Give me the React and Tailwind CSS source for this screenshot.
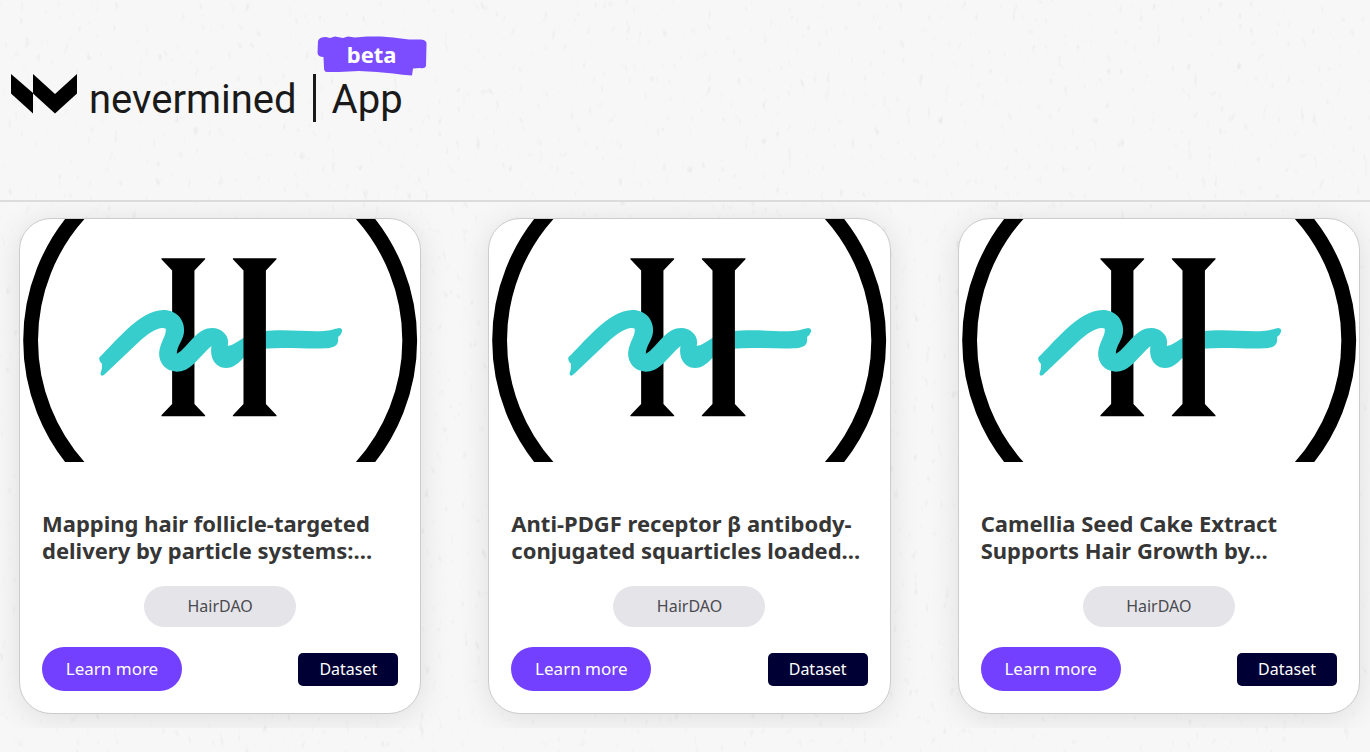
const datasets = [
    {
        id: 1,
        title: "Mapping hair follicle-targeted delivery by particle systems:...",
        author: "HairDAO",
        type: "Dataset",
    },
    {
        id: 2,
        title: "Anti-PDGF receptor β antibody-conjugated squarticles loaded...",
        author: "HairDAO",
        type: "Dataset",
    },
    {
        id: 3,
        title: "Camellia Seed Cake Extract Supports Hair Growth by...",
        author: "HairDAO",
        type: "Dataset",
    },
];

// Faint paper grain behind the whole page
function PaperTexture() {
    return (
        <svg
            className="absolute inset-0 -z-10 h-full w-full"
            aria-hidden="true"
        >
            <filter id="grain" x="0" y="0" width="100%" height="100%">
                <feTurbulence
                    type="fractalNoise"
                    baseFrequency="0.16 0.08"
                    numOctaves="2"
                    seed="4"
                />
                <feColorMatrix values="0 0 0 0 0.6  0 0 0 0 0.6  0 0 0 0 0.6  1.2 0 0 0 -0.81" />
            </filter>
            <rect width="100%" height="100%" filter="url(#grain)" />
        </svg>
    );
}

function NeverminedMark() {
    return (
        <svg className="h-10 w-[66px]" viewBox="0 0 66 40" aria-hidden="true">
            <path d="M0 0L22 19V39.500L0 19.500Z" />
            <path d="M22 0L44 20L66 0V19.500L44 39.500L22 19.500Z" />
        </svg>
    );
}

function BetaBadge() {
    return (
        <span className="absolute -top-[38px] right-[-24px] flex h-10 w-[110px] justify-center">
            <svg
                className="absolute inset-0 h-full w-full"
                viewBox="0 0 110 40"
                aria-hidden="true"
            >
                <path
                    fill="#7b4dff"
                    d="M1 5Q2 1 9 1L13 2L18 0.500L26 2L31 0.500L38 1.500L50 0.500L64 0.500L76 1.500L92 3.500L104 3.500Q110 4 109.500 8L109 30Q108 33 103 32L96 32.500L95 39.500Q86 39 76 37.500L60 36L42 35L22 36L10 36Q7 36 7 32L6.500 21Q1 21 0.500 17Z"
                />
            </svg>
            <span className="relative text-[22px] leading-[36px] font-bold text-white">
                beta
            </span>
        </span>
    );
}

function HairDaoArtwork() {
    return (
        <svg
            className="block h-[243px] w-full"
            viewBox="0 0 400 243"
            preserveAspectRatio="xMidYMid slice"
            role="img"
            aria-label="HairDAO"
        >
            <circle
                cx="200"
                cy="121.5"
                r="189.4"
                fill="none"
                stroke="#000"
                strokeWidth="14.8"
            />
            {/* Left pillar sits under the strand, right pillar over it */}
            <path d="M141.300 39.300H185V40.300L174.300 51.500V185L185 196.200V197.200H141.300V196.200L152 185V51.500L141.300 40.300Z" />
            <g
                fill="#38cdcd"
                transform="translate(60 21) scale(0.3333)"
            >
                <path d="M58 352C100 313 178 210 250 210C290 210 313 240 312 272C311 300 291 314 290 341C306 334 325 307 343 290C360 274 376 264 396 264C424 264 444 285 444 306L443 318C458 316 474 303 495 291V349C473 371 461 384 437 384C406 383 388 354 394 318C378 332 360 352 343 370C325 388 308 395 290 395C256 394 237 370 237 340C239 306 259 290 257 266C236 258 204 281 176 306L74 403Q64 412 61 401Q67 388 66 372Q55 362 58 352Z" />
                <path d="M550 274C610 266 680 276 730 273C750 272 762 267 776 264Q788 264 785 276Q783 284 774 290C773 296 775 302 772 309C768 320 752 325 735 325C680 328 620 320 550 326Z" />
            </g>
            <path d="M212.700 39.300H256.300V40.300L245.700 51.500V185L256.300 196.200V197.200H212.700V196.200L223.300 185V51.500L212.700 40.300Z" />
        </svg>
    );
}

function DatasetCard({ item }) {
    return (
        <article className="overflow-hidden rounded-[32px] border border-[#cccccc] bg-white shadow-[0_4px_30px_rgba(0,0,0,0.1)]">
            <HairDaoArtwork />
            <div className="flex flex-col px-[22px] pt-12 pb-[22px]">
                <h2 className="text-[22px] leading-[27px] font-bold text-[#363636]">
                    {item.title}
                </h2>
                <span className="mt-[22px] w-[152px] self-center rounded-full bg-[#e5e4e9] text-center text-base leading-[41px] text-[#4a4a4f]">
                    {item.author}
                </span>
                <div className="mt-5 flex items-center justify-between">
                    <button
                        type="button"
                        className="h-11 w-[140px] rounded-full bg-[#7440ff] text-[17px] text-white"
                    >
                        Learn more
                    </button>
                    <span className="w-[100px] rounded-[5px] bg-[#000034] text-center text-base leading-[33px] text-white">
                        {item.type}
                    </span>
                </div>
            </div>
        </article>
    );
}

export default function App() {
    return (
        <div className="relative isolate min-h-screen bg-[#f7f7f7] font-['Noto_Sans',sans-serif]">
            <PaperTexture />

            {/* Header */}
            <header className="border-b-2 border-[#dcdcdc] px-[11px] pt-[74px] pb-[76px]">
                <a
                    href="#"
                    className="relative inline-flex h-[50px] items-start align-top text-[#1a1a1a]"
                >
                    <NeverminedMark />
                    <span className="ml-3 h-[50px] overflow-hidden font-[Roboto,sans-serif] text-[40px] leading-[52px]">
                        nevermined
                    </span>
                    <span className="ml-4 h-12 w-[3px] bg-[#1a1a1a]" />
                    <span className="ml-4 h-[50px] overflow-hidden font-[Roboto,sans-serif] text-[40px] leading-[52px]">
                        App
                    </span>
                    <BetaBadge />
                </a>
            </header>

            {/* Dataset cards */}
            <main className="grid grid-cols-1 gap-[67px] overflow-hidden pt-4 pr-[10px] pb-[14px] pl-[19px] md:grid-cols-3">
                {datasets.map((item) => (
                    <DatasetCard key={item.id} item={item} />
                ))}
            </main>
        </div>
    );
}
